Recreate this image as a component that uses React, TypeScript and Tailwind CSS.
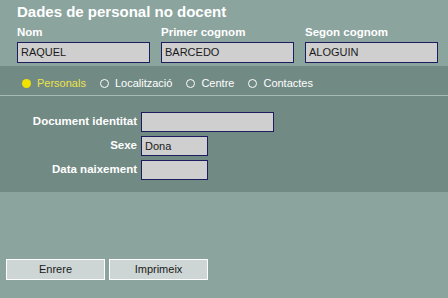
const font = { fontFamily: '"Liberation Sans", Arial, sans-serif' };

const names = [
  { label: "Nom", value: "RAQUEL" },
  { label: "Primer cognom", value: "BARCEDO" },
  { label: "Segon cognom", value: "ALOGUIN" },
];

const tabs = ["Personals", "Localització", "Centre", "Contactes"];

function Field({ value, width }: { value?: string; width: string }) {
  return (
    <div
      className={`${width} h-[20px] border border-[#1c1c5e] bg-[#cfcfcf] px-[3px] text-[11px] leading-[18px] text-[#1a1a1a]`}
    >
      {value}
    </div>
  );
}

export default function App() {
  return (
    <div
      style={font}
      className="flex h-[298px] w-[448px] flex-col overflow-hidden bg-[#8ca49e]"
    >
      {/* capçalera */}
      <div className="h-[66px] pl-[17px] pt-[3px]">
        <h1 className="text-[15px] font-bold leading-[18px] text-white">
          Dades de personal no docent
        </h1>
        <div className="mt-[4px] flex gap-[11px]">
          {names.map((n) => (
            <div key={n.label} className="flex w-[133px] shrink-0 flex-col">
              <span className="text-[11.5px] font-bold leading-[14px] text-white">
                {n.label}
              </span>
              <div className="mt-[3px] h-[21px] border border-[#1c1c5e] bg-[#cfcfcf] px-[3px] text-[11px] leading-[19px] text-[#1a1a1a]">
                {n.value}
              </div>
            </div>
          ))}
        </div>
      </div>

      {/* pestanyes */}
      <div className="flex h-[30px] items-center border-b border-[#a6bab4] bg-[#728a84] pl-[22px] pt-[6px] text-[11px] text-white">
        {tabs.map((t, i) => (
          <label key={t} className="mr-[14px] flex items-center gap-[6px]">
            {i === 0 ? (
              <span className="h-[9px] w-[9px] rounded-full bg-[#f2e200]" />
            ) : (
              <span className="h-[9px] w-[9px] rounded-full border border-white" />
            )}
            <span className={i === 0 ? "text-[#ece44a]" : ""}>{t}</span>
          </label>
        ))}
      </div>

      {/* dades */}
      <div className="flex h-[96px] flex-col gap-[4px] bg-[#728a84] pt-[16px]">
        <div className="flex items-center">
          <span className="w-[141px] pr-[4px] text-right text-[11.5px] font-bold text-white">
            Document identitat
          </span>
          <Field width="w-[133px]" />
        </div>
        <div className="flex items-center">
          <span className="w-[141px] pr-[4px] text-right text-[11.5px] font-bold text-white">
            Sexe
          </span>
          <Field width="w-[67px]" value="Dona" />
        </div>
        <div className="flex items-center">
          <span className="w-[141px] pr-[4px] text-right text-[11.5px] font-bold text-white">
            Data naixement
          </span>
          <Field width="w-[67px]" />
        </div>
      </div>

      <div className="flex-1" />

      {/* botons */}
      <div className="flex gap-[4px] px-[6px] pb-[18px]">
        <button className="h-[21px] w-[99px] border border-white bg-[#cdd6d4] text-[11px] text-[#1a1a1a]">
          Enrere
        </button>
        <button className="h-[21px] w-[99px] border border-white bg-[#cdd6d4] text-[11px] text-[#1a1a1a]">
          Imprimeix
        </button>
      </div>
    </div>
  );
}
